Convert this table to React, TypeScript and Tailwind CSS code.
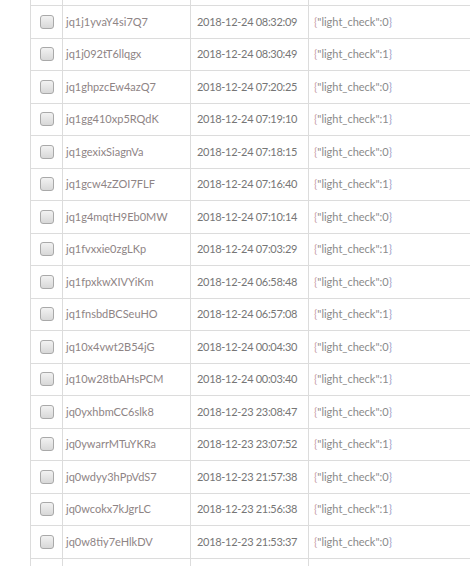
import React from "react";

const rows: [string, string, number][] = [
  ["jq1j1yvaY4si7Q7", "2018-12-24 08:32:09", 0],
  ["jq1j092tT6llqgx", "2018-12-24 08:30:49", 1],
  ["jq1ghpzcEw4azQ7", "2018-12-24 07:20:25", 0],
  ["jq1gg410xp5RQdK", "2018-12-24 07:19:10", 1],
  ["jq1gexixSiagnVa", "2018-12-24 07:18:15", 0],
  ["jq1gcw4zZOI7FLF", "2018-12-24 07:16:40", 1],
  ["jq1g4mqtH9Eb0MW", "2018-12-24 07:10:14", 0],
  ["jq1fvxxie0zgLKp", "2018-12-24 07:03:29", 1],
  ["jq1fpxkwXIVYiKm", "2018-12-24 06:58:48", 0],
  ["jq1fnsbdBCSeuHO", "2018-12-24 06:57:08", 1],
  ["jq10x4vwt2B54jG", "2018-12-24 00:04:30", 0],
  ["jq10w28tbAHsPCM", "2018-12-24 00:03:40", 1],
  ["jq0yxhbmCC6slk8", "2018-12-23 23:08:47", 0],
  ["jq0ywarrMTuYKRa", "2018-12-23 23:07:52", 1],
  ["jq0wdyy3hPpVdS7", "2018-12-23 21:57:38", 0],
  ["jq0wcokx7kJgrLC", "2018-12-23 21:56:38", 1],
  ["jq0w8tiy7eHlkDV", "2018-12-23 21:53:37", 0],
];

function Box() {
  return (
    <div className="w-[14px] h-[14px] rounded-[3px] border border-[#a9a9a9] bg-gradient-to-b from-[#f2f2f2] to-[#d8d8d8]" />
  );
}

function Row({ id, date, v }: { id: string; date: string; v: number }) {
  return (
    <div className="flex border-b border-[#dcdcdc] h-[32.5px]">
      <div className="w-[32px] shrink-0 border-r border-[#dcdcdc] flex items-center justify-center">
        <Box />
      </div>
      <div className="w-[128px] shrink-0 border-r border-[#dcdcdc] flex items-center pl-[3px] text-[#8e8485]">{id}</div>
      <div className="w-[118px] shrink-0 border-r border-[#dcdcdc] flex items-center pl-[6px] text-[#767676] tracking-[-0.3px]">{date}</div>
      <div className="flex-1 flex items-center pl-[5px] text-[#8a8a8a]">
        <span className="text-[#c9a0a8]">{"{"}</span>"light_check":{v}
        <span className="text-[#a0a0c9]">{"}"}</span>
      </div>
    </div>
  );
}

export default function App() {
  return (
    <div className="w-[470px] h-[566px] overflow-hidden bg-white" style={{ fontFamily: "Lato, 'Open Sans', sans-serif" }}>
      <div className="ml-[30px] w-[480px] border-l border-[#dcdcdc] text-[11px]">
        <div className="flex border-b border-[#dcdcdc] h-[6px]">
          <div className="w-[32px] border-r border-[#dcdcdc]" />
          <div className="w-[128px] border-r border-[#dcdcdc]" />
          <div className="w-[118px] border-r border-[#dcdcdc]" />
        </div>
        {rows.map((r, i) => (
          <Row key={i} id={r[0]} date={r[1]} v={r[2]} />
        ))}
        <div className="flex h-[20px]">
          <div className="w-[32px] border-r border-[#dcdcdc] flex justify-center pt-[8px]">
            <Box />
          </div>
          <div className="w-[128px] border-r border-[#dcdcdc]" />
          <div className="w-[118px] border-r border-[#dcdcdc]" />
        </div>
      </div>
    </div>
  );
}
